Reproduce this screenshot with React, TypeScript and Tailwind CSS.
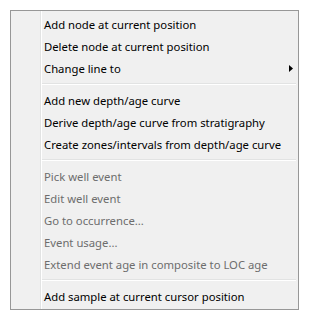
type Item = { label?: string; disabled?: boolean; submenu?: boolean; sep?: boolean };

const items: Item[] = [
  { label: 'Add node at current position' },
  { label: 'Delete node at current position' },
  { label: 'Change line to', submenu: true },
  { sep: true },
  { label: 'Add new depth/age curve' },
  { label: 'Derive depth/age curve from stratigraphy' },
  { label: 'Create zones/intervals from depth/age curve' },
  { sep: true },
  { label: 'Pick well event', disabled: true },
  { label: 'Edit well event', disabled: true },
  { label: 'Go to occurrence...', disabled: true },
  { label: 'Event usage...', disabled: true },
  { label: 'Extend event age in composite to LOC age', disabled: true },
  { sep: true },
  { label: 'Add sample at current cursor position' },
];

const App: React.FC = () => {
  return (
    <div className="min-h-screen bg-white pl-[10px] pt-[10px]" style={{ fontFamily: '"Noto Sans", "Open Sans", sans-serif' }}>
      <div className="flex w-[289px] border border-[#979797] bg-[#f0f0f0]">
        {/* Gutter */}
        <div className="w-[31px] shrink-0 border-r border-white">
          <div className="h-full w-[30px] border-r border-[#e2e3e3]" />
        </div>

        {/* Items */}
        <div className="flex-1 py-[2px]">
          {items.map((it, i) =>
            it.sep ? (
              <div key={i} className="h-[10px] flex items-center pr-[2px]">
                <div className="w-full border-t border-b border-t-[#e2e3e3] border-b-white" />
              </div>
            ) : (
              <div
                key={i}
                className={`h-[22px] flex items-center pl-[2px] pr-[5px] pt-[2px] text-[11.3px] leading-none whitespace-nowrap ${
                  it.disabled ? 'text-[#6d6d6d]' : 'text-black'
                }`}
              >
                <span>{it.label}</span>
                {it.submenu && (
                  <svg className="ml-auto -mt-[2px]" width="4" height="7" viewBox="0 0 4 7">
                    <path d="M0 0 L4 3.5 L0 7 Z" fill="#000" />
                  </svg>
                )}
              </div>
            )
          )}
        </div>
      </div>
    </div>
  );
};

export default App;
